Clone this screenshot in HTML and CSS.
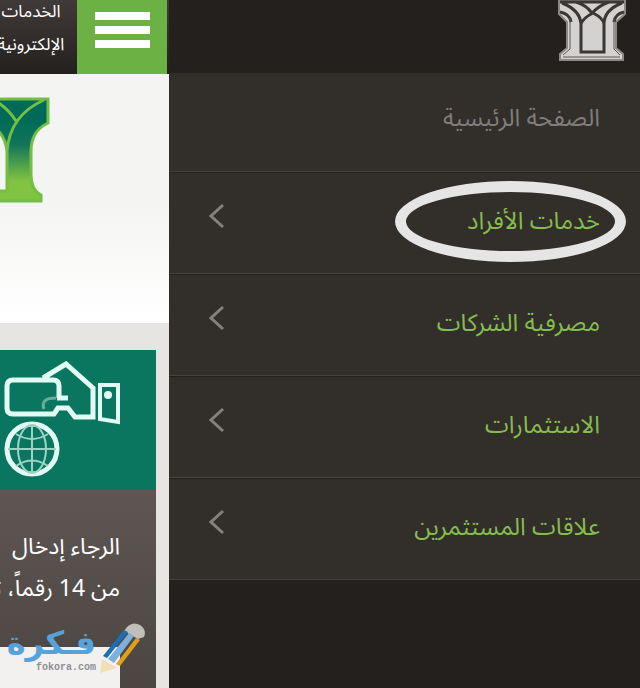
FILE: index.html
```html
<!DOCTYPE html>
<html lang="ar" dir="rtl">
<head>
    <meta charset="UTF-8">
    <meta name="viewport" content="width=device-width, initial-scale=1.0">
    <title>الخدمات الإلكترونية</title>
    <link rel="stylesheet" href="styles.css">
</head>
<body>
    <nav class="drawer">
        <div class="drawer-header">
            <svg class="drawer-logo" width="68" height="62" viewBox="0 0 68 62">
                <path d="M1 0H67V14L58 22V48L65 54V60H2V54L9 48V22L1 14Z" fill="#d3d2d1" stroke="#8b8886" stroke-width="2"/>
                <path d="M2 2H66M4 3Q22 10 23 24V52H46V24Q46 10 64 3M23 24Q25 18 35 13Q45 18 46 24M18 2Q28 5 34 13Q42 5 51 2M2 12Q12 14 13 22M66 12Q57 14 56 22" fill="none" stroke="#3b3735" stroke-width="3"/>
                <path d="M12 18V49L5 55M56 18V49L62 55M5 57H62" fill="none" stroke="#5b5755" stroke-width="1"/>
            </svg>
        </div>
        <ul class="menu">
            <li><a href="#" class="menu-link current">الصفحة الرئيسية</a></li>
            <li class="marked">
                <a href="#" class="menu-link">خدمات الأفراد
                    <svg class="arrow" width="16" height="26" viewBox="0 0 16 26"><path d="M14 2L2 13L14 24"/></svg>
                </a>
            </li>
            <li>
                <a href="#" class="menu-link">مصرفية الشركات
                    <svg class="arrow" width="16" height="26" viewBox="0 0 16 26"><path d="M14 2L2 13L14 24"/></svg>
                </a>
            </li>
            <li>
                <a href="#" class="menu-link">الاستثمارات
                    <svg class="arrow" width="16" height="26" viewBox="0 0 16 26"><path d="M14 2L2 13L14 24"/></svg>
                </a>
            </li>
            <li>
                <a href="#" class="menu-link">علاقات المستثمرين
                    <svg class="arrow" width="16" height="26" viewBox="0 0 16 26"><path d="M14 2L2 13L14 24"/></svg>
                </a>
            </li>
        </ul>
    </nav>

    <main class="page">
        <header class="topbar">
            <button class="menu-button" aria-label="القائمة">
                <span></span>
                <span></span>
                <span></span>
            </button>
            <a href="#" class="services-link">الخدمات<br>الإلكترونية</a>
        </header>

        <div class="brand">
            <svg class="brand-logo" width="112" height="106" viewBox="0 0 112 106">
                <defs>
                    <linearGradient id="leaf" x1="0" y1="0" x2="0" y2="1">
                        <stop offset="0.2" stop-color="#006a58"/>
                        <stop offset="0.45" stop-color="#12755a"/>
                        <stop offset="0.8" stop-color="#82c341"/>
                    </linearGradient>
                </defs>
                <path d="M2 1H110V26Q93 34 93 54V78Q93 93 103 98V105H9V98Q19 93 19 78V54Q19 34 2 26Z" fill="url(#leaf)"/>
                <path d="M69 94V54Q67 38 56 30Q45 38 43 54V94Z" fill="#f4f4f3"/>
                <path d="M110 2V26Q93 34 93 54V78Q93 93 103 98V104H9V98Q19 93 19 78V54Q19 34 2 26V2ZM69 94V54Q72 18 106 3M69 54Q67 38 56 30Q45 38 43 54V94H69M43 54Q40 18 6 3M78 24Q70 11 56 3Q42 11 34 24" fill="none" stroke="#72bf44" stroke-width="3"/>
            </svg>
        </div>

        <section class="card">
            <div class="card-icon">
                <svg width="116" height="118" viewBox="0 0 116 118" fill="none" stroke="#e2fbf5" stroke-width="5">
                    <path d="M55 37V25Q55 19 49 19H9Q3 19 3 25V47Q3 53 9 53H50L54 47H64L71 56H89V27L62 3L39 17"/>
                    <path d="M64 37H53"/>
                    <path d="M52 37Q36 37 40 48" stroke="#69ad9f" stroke-width="3"/>
                    <path d="M96 24H114V61L96 58Z" stroke-width="4"/>
                    <circle cx="104" cy="34" r="4" fill="#e2fbf5" stroke="none"/>
                    <circle cx="28" cy="88" r="25"/>
                    <path d="M28 63V113M4 88H52M12 73Q28 83 44 73M12 105Q28 94 44 105" stroke="#9cd3c4" stroke-width="2"/>
                    <ellipse cx="28" cy="88" rx="14" ry="24" stroke="#9cd3c4" stroke-width="2"/>
                </svg>
            </div>
            <form class="card-form">
                <label for="account">الرجاء إدخال<br>من 14 رقماً، ثم</label>
                <input type="text" id="account">
            </form>
        </section>

        <div class="watermark">
            <div class="watermark-text">
                <span class="watermark-name">فـكرة</span>
                <span class="watermark-url">fokora.com</span>
            </div>
            <svg class="pencil" width="46" height="52" viewBox="0 0 46 52">
                <path d="M27 5Q33 -1 40 3Q47 8 44 15L38 17L24 9Z" fill="#c0bfb6"/>
                <path d="M24 8L28 10L7 36L3 34Z" fill="#1b6fb5"/>
                <path d="M29 11L34 14L14 41L8 37Z" fill="#7fb0dc"/>
                <path d="M36 16L40 18L20 44L16 42Z" fill="#e0a01c"/>
                <path d="M2 37L17 46L0 51Z" fill="#f3dfb6"/>
            </svg>
        </div>
    </main>
</body>
</html>
```
FILE: styles.css
```css
* {
    margin: 0;
    padding: 0;
    box-sizing: border-box;
    font-family: "Noto Sans Arabic", "Noto Sans", "DejaVu Sans", sans-serif;
}

body {
    display: flex;
    height: 100vh;
    background: #24201e;
    overflow: hidden;
}

a {
    text-decoration: none;
}

/* Side menu */
.drawer {
    flex: 1;
}

.drawer-header {
    height: 72px;
    padding-right: 14px;
}

.drawer-logo {
    display: block;
}

.menu {
    list-style: none;
}

.menu li {
    position: relative;
    background: #322e2a;
    border-top: 1px solid #24201e;
    border-bottom: 1px solid #45413d;
}

.menu-link {
    display: flex;
    align-items: center;
    justify-content: space-between;
    height: 100px;
    padding: 0 40px 4px;
    color: #85bd4d;
    font-size: 24px;
}

.menu-link.current {
    height: 98px;
    padding-bottom: 8px;
    color: #807d7a;
}

.arrow {
    margin-bottom: 10px;
    fill: none;
    stroke: #85817e;
    stroke-width: 3;
}

.marked::after {
    content: "";
    position: absolute;
    top: 8px;
    right: 14px;
    z-index: 1;
    box-sizing: border-box;
    width: 231px;
    height: 81px;
    border: 11px solid #e6e5e5;
    border-radius: 50%;
    pointer-events: none;
}

/* Page pushed aside by the menu */
.page {
    position: relative;
    display: flex;
    flex-direction: column;
    flex: 0 0 169px;
    background: #e6e5e2;
    overflow: hidden;
}

.topbar {
    display: flex;
    flex-shrink: 0;
    height: 74px;
    padding-right: 2px;
    background: linear-gradient(#403b38, #24201e);
}

.menu-button {
    display: flex;
    flex-direction: column;
    flex: 0 0 90px;
    align-items: center;
    gap: 6px;
    padding-top: 12px;
    background: #6cb144;
    border: none;
    cursor: pointer;
}

.menu-button span {
    width: 55px;
    height: 8px;
    background: white;
}

.services-link {
    flex: 0 0 92px;
    margin-top: -4px;
    color: white;
    font-size: 17px;
    line-height: 33px;
    text-align: center;
    white-space: nowrap;
}

.brand {
    flex-shrink: 0;
    height: 249px;
    padding: 23px 119px 0 0;
    background: linear-gradient(#f4f4f3 50%, white);
}

.brand-logo {
    display: block;
}

.card {
    display: flex;
    flex-direction: column;
    flex: 1;
    width: 320px;
    margin: 27px 13px 0 0;
}

.card-icon {
    flex-shrink: 0;
    height: 140px;
    padding: 11px 36px 0 0;
    background: #0b7660;
}

.card-form {
    flex: 1;
    padding: 36px 36px 0;
    background: linear-gradient(#5d5653, #4b4542);
}

label {
    display: block;
    color: white;
    font-size: 23px;
    line-height: 42px;
    white-space: nowrap;
}

input {
    width: 100%;
    height: 50px;
    margin-top: 37px;
    padding: 0 12px;
    background: #f2f1f0;
    border: none;
    font-size: 20px;
}

/* Site mark over the corner of the page */
.watermark {
    position: absolute;
    left: 6px;
    bottom: 14px;
    display: flex;
    direction: ltr;
    align-items: flex-end;
}

.watermark-text {
    display: flex;
    flex-direction: column;
    align-items: flex-end;
    width: 90px;
}

.watermark-name {
    color: #57a2d8;
    font-family: "DejaVu Sans", sans-serif;
    font-size: 32px;
    font-weight: bold;
    line-height: 38px;
}

.watermark-url {
    color: #8c9092;
    font-family: "Liberation Mono", monospace;
    font-size: 10px;
    font-weight: bold;
    line-height: 12px;
}

.pencil {
    margin-left: 4px;
}
```
